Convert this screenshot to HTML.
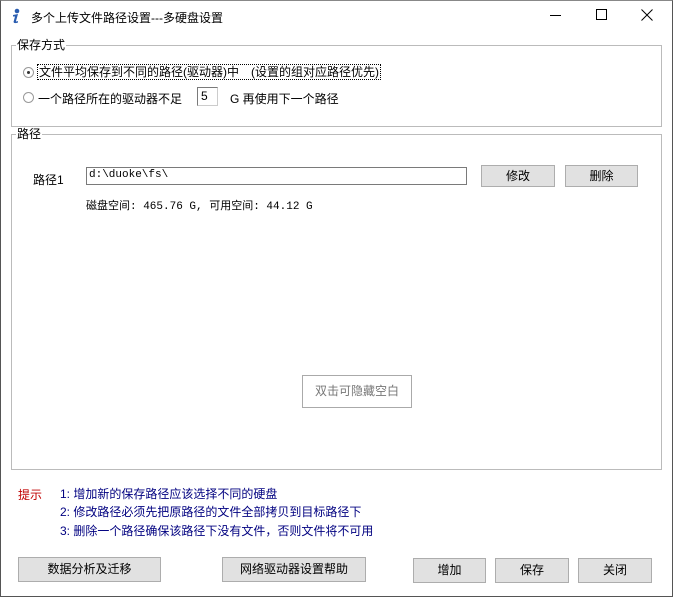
<!DOCTYPE html>
<html><head><meta charset="utf-8"><style>
*{margin:0;padding:0;box-sizing:border-box}
body{width:673px;height:597px;background:#fff;position:relative;overflow:hidden;font-family:"Liberation Sans","Noto Sans CJK SC",sans-serif;font-size:12px;color:#000}
.a{position:absolute;white-space:nowrap}
.win{position:absolute;left:0;top:0;width:673px;height:597px;border:1px solid #555;border-top:1px solid #888}
.gb{position:absolute;border:1px solid #bbb}
.lbl{position:absolute;background:#fff;padding:0 1px;font-size:12px;line-height:14px}
.btn{position:absolute;background:#e1e1e1;border:1px solid #adadad;text-align:center;font-size:12px}
.rad{position:absolute;width:11px;height:11px;border:1px solid #999;border-radius:50%;background:#fff}
</style></head><body>
<div class="win"></div>
<svg class="a" style="left:9px;top:8px" width="14" height="16" viewBox="0 0 14 16"><circle cx="8" cy="3" r="2.3" fill="#2a5db0"/><path d="M4 7 L9 6 L7 13 Q7 14 9 13 L9 14.5 Q5 16 4.5 14 L6 8.5 L4 8.5Z" fill="#2a5db0"/></svg>
<div class="a" style="left:31px;top:9px;font-size:12px">多个上传文件路径设置---多硬盘设置</div>
<div class="a" style="left:550px;top:15px;width:11px;height:1px;background:#000"></div>
<div class="a" style="left:596px;top:9px;width:11px;height:11px;border:1px solid #000"></div>
<svg class="a" style="left:641px;top:9px" width="12" height="12"><path d="M0.5 0.5L11.5 11.5M11.5 0.5L0.5 11.5" stroke="#000" stroke-width="1"/></svg>

<div class="gb" style="left:11px;top:45px;width:651px;height:82px"></div>
<div class="lbl" style="left:16px;top:38px">保存方式</div>
<div class="rad" style="left:23px;top:67px"><div style="position:absolute;left:3px;top:3px;width:3px;height:3px;background:#333;border-radius:50%"></div></div>
<div class="a" style="left:37px;top:64px;border:1px dotted #000;padding:0 1px;line-height:14px">文件平均保存到不同的路径(驱动器)中　(设置的组对应路径优先)</div>
<div class="rad" style="left:23px;top:92px"></div>
<div class="a" style="left:38px;top:90px">一个路径所在的驱动器不足</div>
<div class="a" style="left:197px;top:87px;width:21px;height:19px;border:1px solid #7a7a7a;border-right-color:#ccc;border-bottom-color:#ccc;padding-left:3px;line-height:16px">5</div>
<div class="a" style="left:230px;top:90px">G 再使用下一个路径</div>

<div class="gb" style="left:11px;top:134px;width:651px;height:336px"></div>
<div class="lbl" style="left:16px;top:127px">路径</div>
<div class="a" style="left:33px;top:171px">路径1</div>
<div class="a" style="left:86px;top:167px;width:381px;height:18px;border:1px solid #7a7a7a;padding-left:2px;font-family:'Liberation Mono',monospace;font-size:11px;line-height:15px">d:\duoke\fs\</div>
<div class="btn" style="left:481px;top:165px;width:74px;height:22px;line-height:20px">修改</div>
<div class="btn" style="left:565px;top:165px;width:73px;height:22px;line-height:20px">删除</div>
<div class="a" style="left:86px;top:197px;font-size:11px;font-family:'Liberation Mono','Noto Sans CJK SC',monospace">磁盘空间: 465.76 G, 可用空间: 44.12 G</div>
<div class="a" style="left:302px;top:375px;width:110px;height:33px;border:1px solid #aaa;color:#777;text-align:center;line-height:31px">双击可隐藏空白</div>

<div class="a" style="left:18px;top:486px;color:#c00000">提示</div>
<div class="a" style="left:60px;top:485px;color:#000080">1: 增加新的保存路径应该选择不同的硬盘</div>
<div class="a" style="left:60px;top:503px;color:#000080">2: 修改路径必须先把原路径的文件全部拷贝到目标路径下</div>
<div class="a" style="left:60px;top:522px;color:#000080">3: 删除一个路径确保该路径下没有文件，否则文件将不可用</div>

<div class="btn" style="left:18px;top:557px;width:143px;height:25px;line-height:23px">数据分析及迁移</div>
<div class="btn" style="left:222px;top:557px;width:144px;height:25px;line-height:23px">网络驱动器设置帮助</div>
<div class="btn" style="left:413px;top:558px;width:73px;height:25px;line-height:23px">增加</div>
<div class="btn" style="left:495px;top:558px;width:74px;height:25px;line-height:23px">保存</div>
<div class="btn" style="left:578px;top:558px;width:74px;height:25px;line-height:23px">关闭</div>
</body></html>
